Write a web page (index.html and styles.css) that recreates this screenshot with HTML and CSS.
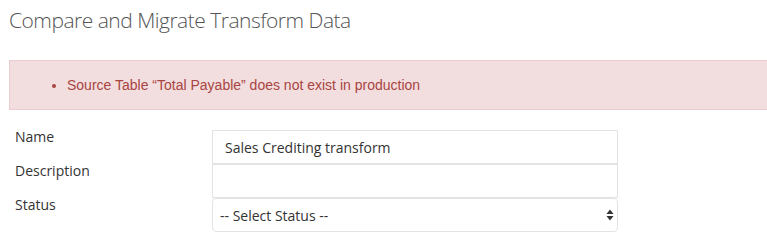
FILE: index.html
```html
<!DOCTYPE html>
<html lang="en">
<head>
<meta charset="utf-8">
<title>Compare and Migrate Transform Data</title>
<link rel="stylesheet" href="styles.css">
</head>
<body>
<div class="page">
  <h1 class="title">Compare and Migrate Transform Data</h1>
  <div class="alert">
    <ul class="alert-list">
      <li>Source Table “Total Payable” does not exist in production</li>
    </ul>
  </div>
  <form class="form">
    <label class="label" for="name">Name</label>
    <input class="field" id="name" type="text" value="Sales Crediting transform">
    <label class="label" for="desc">Description</label>
    <input class="field" id="desc" type="text" value="">
    <label class="label" for="status">Status</label>
    <div class="select-wrap">
      <select class="field select" id="status">
        <option>-- Select Status --</option>
      </select>
      <svg class="select-arrows" width="8" height="12" viewBox="0 0 8 12" aria-hidden="true">
        <path d="M4 0.5 L7.5 5 L0.5 5 Z" fill="#333"/>
        <path d="M4 11.5 L7.5 7 L0.5 7 Z" fill="#333"/>
      </svg>
    </div>
  </form>
</div>
</body>
</html>
```

FILE: styles.css
```css
html, body {
  margin: 0;
  padding: 0;
  background: #fff;
  overflow: hidden;
}
.page {
  padding: 0 0 0 9px;
  font-family: "Open Sans", "Liberation Sans", sans-serif;
  color: #333;
}
.title {
  margin: 0;
  padding-top: 5px;
  font-family: "Open Sans", sans-serif;
  font-weight: 300;
  font-size: 21px;
  line-height: 30px;
  color: #555;
  letter-spacing: -0.5px;
}
.alert {
  margin: 25px -30px 0 0;
  height: 50px;
  box-sizing: border-box;
  background: #f2dede;
  border: 1px solid #ebccd1;
  display: flex;
  align-items: center;
  font-family: "Liberation Sans", Arial, sans-serif;
  font-size: 14px;
  color: #a94442;
}
.alert-list {
  margin: 0;
  padding: 0 0 0 57px;
  list-style: disc;
  line-height: 20px;
}
.form {
  display: grid;
  grid-template-columns: 197px 406px;
  grid-auto-rows: 34px;
  margin-top: 20px;
  padding-left: 6px;
}
.label {
  font-size: 14px;
  line-height: 20px;
  margin-top: -3px;
  color: #333;
}
.field {
  box-sizing: border-box;
  width: 100%;
  height: 34px;
  margin: 0;
  border: 1px solid #e3e3e3;
  border-radius: 0;
  background: #fff;
  font-family: "Open Sans", sans-serif;
  font-size: 14px;
  color: #333;
  padding: 0 12px;
  outline: none;
}
.select-wrap {
  position: relative;
}
.select {
  appearance: none;
  -webkit-appearance: none;
  border-radius: 4px;
  padding: 0 24px 0 7px;
}
.select-arrows {
  position: absolute;
  right: 4px;
  top: 11px;
}
```
